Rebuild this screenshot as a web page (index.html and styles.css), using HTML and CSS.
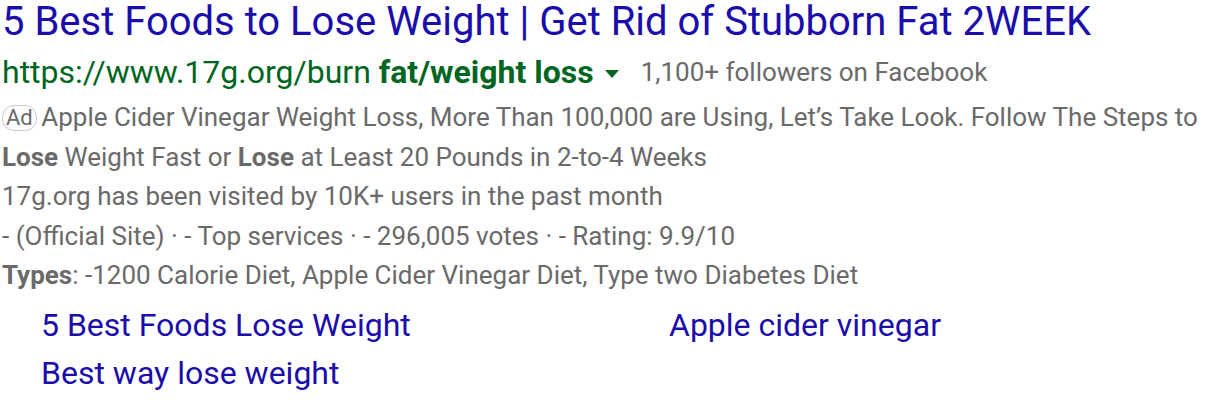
FILE: index.html
```html
<!DOCTYPE html>
<html>
<head>
<meta charset="utf-8">
<link rel="stylesheet" href="styles.css">
</head>
<body>
<div class="result">
  <div class="title">5 Best Foods to Lose Weight | Get Rid of Stubborn Fat 2WEEK</div>
  <div class="urlline">
    <span class="url">https://www.17g.org/burn <b>fat/weight loss</b></span>
    <span class="arrow"></span>
    <span class="followers">1,100+ followers on Facebook</span>
  </div>
  <div class="desc">
    <div class="line"><span class="ad">Ad</span> Apple Cider Vinegar Weight Loss, More Than 100,000 are Using, Let’s Take Look. Follow The Steps to</div>
    <div class="line"><b>Lose</b> Weight Fast or <b>Lose</b> at Least 20 Pounds in 2-to-4 Weeks</div>
    <div class="line">17g.org has been visited by 10K+ users in the past month</div>
    <div class="line">- (Official Site) · - Top services · - 296,005 votes · - Rating: 9.9/10</div>
    <div class="line"><b>Types</b>: -1200 Calorie Diet, Apple Cider Vinegar Diet, Type two Diabetes Diet</div>
  </div>
  <div class="sitelinks">
    <a class="sl">5 Best Foods Lose Weight</a>
    <a class="sl">Apple cider vinegar</a>
    <a class="sl">Best way lose weight</a>
  </div>
</div>
</body>
</html>
```
FILE: styles.css
```css
html, body { margin: 0; padding: 0; background: #fff; }
body { font-family: Roboto, "Liberation Sans", sans-serif; }
.result { padding: 0 0 0 2px; }
.title { color: #1a0dab; font-size: 40px; line-height: 44px; white-space: nowrap; }
.urlline { display: flex; align-items: center; height: 48px; margin-top: 4px; white-space: nowrap; }
.url { color: #006621; font-size: 32px; line-height: 48px; }
.url b { font-weight: 700; }
.arrow { width: 0; height: 0; border-left: 7px solid transparent; border-right: 7px solid transparent; border-top: 8px solid #006621; margin: 4px 22px 0 11px; }
.followers { color: #6a6a6a; font-size: 26px; line-height: 48px; }
.desc { color: #6a6a6a; font-size: 26px; margin-top: 2px; }
.line { line-height: 39.5px; white-space: nowrap; }
.desc b { font-weight: 700; }
.ad { display: inline-block; font-size: 22px; line-height: 24px; padding: 0 3px; border: 1px solid #c8c8c8; border-radius: 12px; color: #6a6a6a; vertical-align: 1px; margin-right: -2px; }
.sitelinks { display: grid; grid-template-columns: 628px auto; padding-left: 39px; margin-top: 5px; }
.sl { color: #1a0dab; font-size: 32px; line-height: 48px; white-space: nowrap; }
```
